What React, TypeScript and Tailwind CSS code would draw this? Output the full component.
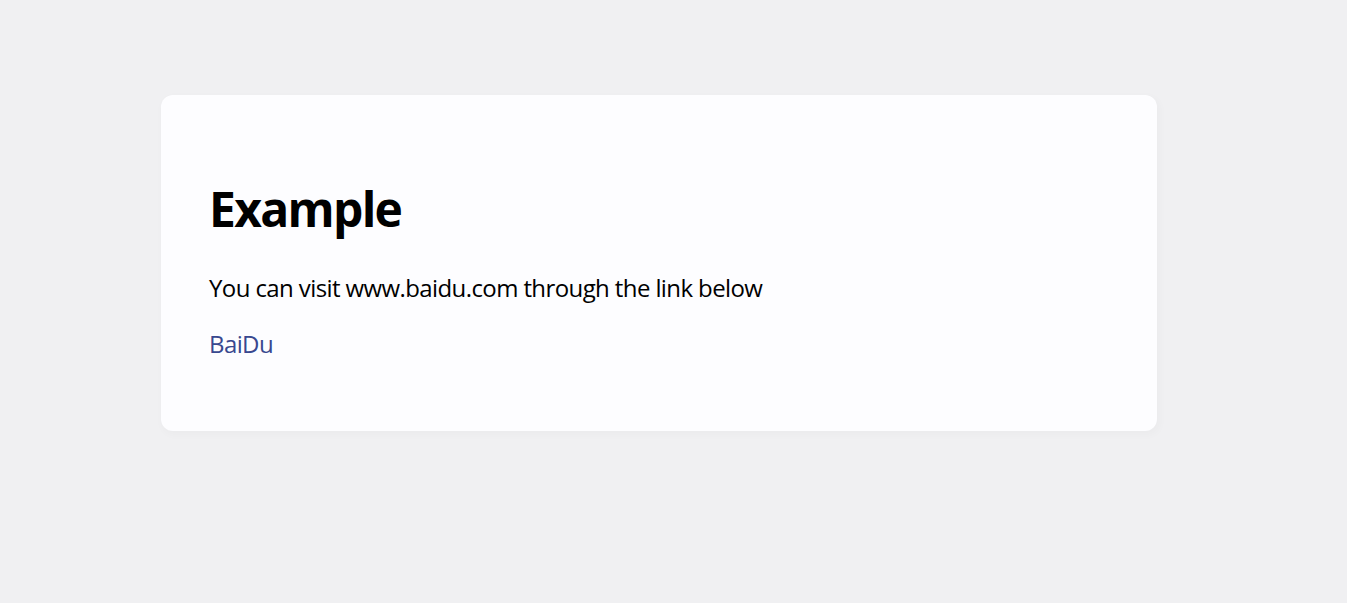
import React from 'react';

const App: React.FC = () => {
  return (
    <div className="min-h-screen bg-[#f0f0f2] pt-[95px] font-['Open_Sans',sans-serif] text-black">
      <div className="ml-[161px] w-[996px] rounded-[12px] bg-[#fdfdff] p-12 shadow-[2px_3px_7px_2px_rgba(0,0,0,0.02)]">
        <h1 className="mb-[30px] mt-[34px] text-[48px] font-bold leading-[64px] tracking-[-1.7px]">Example</h1>
        <p className="mb-6 pt-[2px] text-[24px] leading-[30px] tracking-[-0.6px]">
          You can visit www.baidu.com through the link below
        </p>
        <p className="mb-6 pt-[2px] text-[24px] leading-[30px] tracking-[-0.6px]">
          <a href="https://www.baidu.com" className="text-[#38488f] no-underline">
            BaiDu
          </a>
        </p>
      </div>
    </div>
  );
};

export default App;
